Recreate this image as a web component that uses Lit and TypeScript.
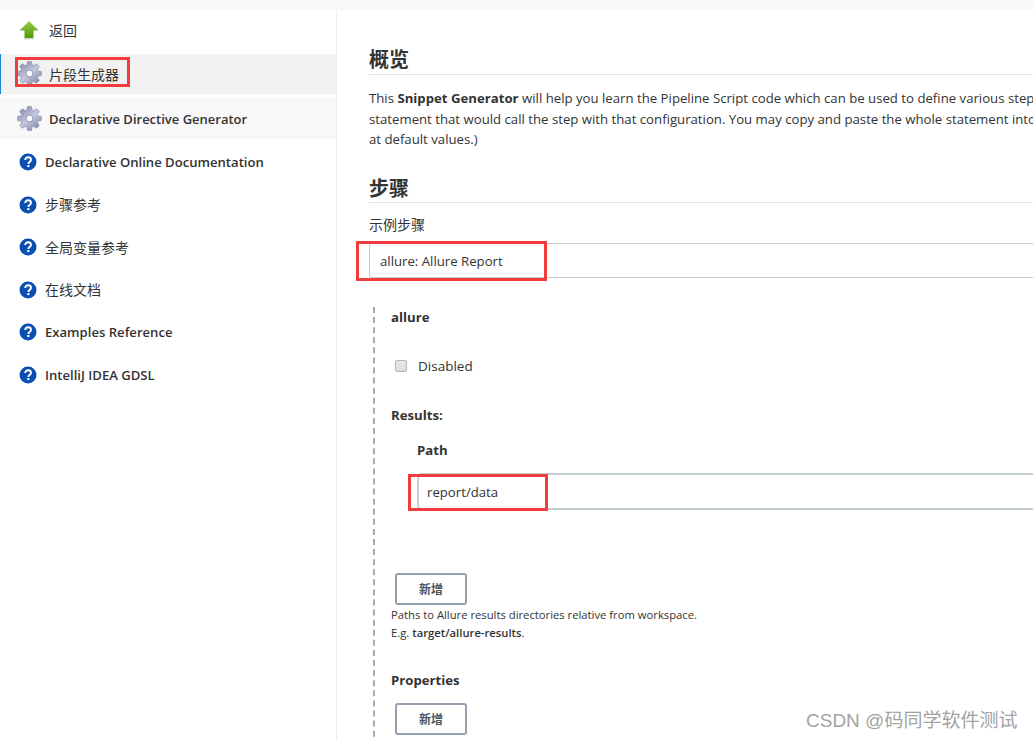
import { LitElement, html, css, svg } from "lit";
import { customElement } from "lit/decorators.js";

const gearPath = (() => {
  const n = 8, cx = 12, cy = 12, ro = 11.6, ri = 8;
  let d = "";
  for (let i = 0; i < n; i++) {
    const a = (i / n) * Math.PI * 2 - Math.PI / 2;
    const w = 0.2, v = 0.17;
    const pts = [
      [ri, a - w - v], [ro, a - w + 0.04], [ro, a + w - 0.04], [ri, a + w + v],
    ];
    for (const [r, t] of pts) {
      d += `${d ? "L" : "M"}${(cx + r * Math.cos(t)).toFixed(2)} ${(cy + r * Math.sin(t)).toFixed(2)}`;
    }
  }
  return d + "Z";
})();

const gear = (id: string) => svg`<svg class="gear" viewBox="0 0 24 24" width="25" height="25">
  <defs><linearGradient id=${id} x1="0.1" y1="0" x2="0.9" y2="1">
    <stop offset="0" stop-color="#7f85ab"/><stop offset="0.5" stop-color="#c6c8de"/><stop offset="1" stop-color="#7b7fa3"/>
  </linearGradient></defs>
  <path d=${gearPath} fill=${`url(#${id})`} stroke="#7d81a0" stroke-width="0.5"/>
  <circle cx="12" cy="12" r="3.3" fill="#fff" stroke="#6f7395" stroke-width="0.7"/>
</svg>`;

const arrow = svg`<svg class="arrow" viewBox="0 0 20 20" width="20" height="20">
  <defs><linearGradient id="ag" x1="0" y1="0" x2="0" y2="1">
    <stop offset="0" stop-color="#9ccc50"/><stop offset="1" stop-color="#4f9a06"/>
  </linearGradient></defs>
  <path d="M10 1 L19.5 10.5 L14.5 10.5 L14.5 18 L5.5 18 L5.5 10.5 L0.5 10.5 Z" fill="url(#ag)"/>
  <rect x="5" y="18" width="10" height="1.4" fill="#d5d8d0"/>
</svg>`;

const help = svg`<svg class="help" viewBox="0 0 18 18" width="18" height="18">
  <circle cx="9" cy="9" r="8.5" fill="#0b4fb3"/>
  <path d="M6.2 7 C6.2 5.2 7.5 4.2 9.1 4.2 C10.8 4.2 12 5.2 12 6.7 C12 8 11.2 8.6 10.3 9.2 C9.6 9.7 9.4 10 9.4 10.9" fill="none" stroke="#fff" stroke-width="1.9"/>
  <rect x="8.3" y="12" width="2.1" height="2.1" fill="#fff"/>
</svg>`;

@customElement("app-root")
export class AppRoot extends LitElement {
  static styles = css`
    :host {
      display: block;
      position: relative;
      width: 1033px;
      height: 740px;
      overflow: hidden;
      background: #fff;
      color: #333;
      font-family: "Open Sans", "Noto Sans CJK SC", sans-serif;
      font-size: 13.2px;
    }
    .cjk { font-size: 14px; font-weight: 400; }
    .strip { height: 10px; background: #f8f8f8; }
    .page { display: flex; height: 730px; }
    .side { width: 336px; flex: none; border-right: 1px solid #eee; }
    .row { display: flex; align-items: center; color: #333; }
    .back {
      height: 43px;
      padding-left: 19px;
      gap: 10px;
      padding-bottom: 3px;
      box-sizing: border-box;
      margin-bottom: 1px;
    }
    .active {
      height: 40px;
      background: #f2f2f2;
      border-left: 1px solid #1387d4;
      padding-left: 16px;
      padding-bottom: 1px;
      box-sizing: border-box;
      gap: 7px;
    }
    .decl {
      height: 41px;
      margin-top: 4px;
      background: #f8f8f8;
      padding-left: 17px;
      gap: 7px;
      font-size: 13px;
      font-weight: 600;
    }
    .helps { display: flex; flex-direction: column; padding-top: 2px; }
    .help-row { height: 42.5px; padding-left: 19px; gap: 8px; font-size: 13.1px; font-weight: 600; }
    .help-row .cjk { margin-bottom: 1px; }
    .main { flex: 1; min-width: 0; overflow: hidden; padding: 33px 0 0 32px; }
    h2 {
      margin: 0;
      font-size: 20px;
      line-height: 34px;
      font-weight: 700;
      color: #333;
      border-bottom: 1px solid #e1e1e1;
      height: 31px;
    }
    .para { margin: 0; padding-top: 13px; line-height: 20.7px; white-space: nowrap; }
    .para b { font-weight: 700; }
    h2.steps { margin-top: 20.9px; line-height: 35px; }
    .lbl { margin-top: 12px; line-height: 20px; }
    .select {
      margin-top: 8px;
      height: 33px;
      border: 1px solid #c3cccf;
      border-right: none;
      border-radius: 3px 0 0 3px;
      padding-left: 10px;
      display: flex;
      align-items: center;
      white-space: nowrap;
    }
    .block {
      margin: 29px 0 0 4px;
      border-left: 2px dashed #aaa;
      padding-left: 16px;
      height: 470px;
    }
    .t { font-weight: 700; line-height: 20px; }
    .allure { margin-top: 1px; }
    .check { display: flex; align-items: center; margin: 29px 0 0 4px; height: 20px; gap: 11px; }
    .check span:last-child { font-size: 13.5px; }
    .box {
      width: 10px;
      height: 10px;
      border: 1px solid #b4b4b4;
      border-radius: 2px;
      background: linear-gradient(#e9e9e9, #dcdcdc);
    }
    .results { margin-top: 29px; }
    .path { margin: 15px 0 0 26px; }
    .input {
      margin: 13px 0 0 26px;
      height: 33px;
      border: 2px solid #c3cfd0;
      border-right: none;
      border-radius: 4px 0 0 4px;
      padding-left: 8px;
      display: flex;
      align-items: center;
      white-space: nowrap;
    }
    .btn {
      display: flex;
      align-items: center;
      justify-content: center;
      margin-left: 4px;
      width: 68px;
      height: 28px;
      border: 2px solid #95a1ac;
      border-radius: 3px;
      font-size: 12px;
      font-weight: 600;
      color: #4d545d;
      background: #fff;
    }
    .add1 { margin-top: 63px; }
    .hint { font-size: 11.25px; line-height: 18px; margin-top: 1px; color: #333; white-space: nowrap; }
    .hint b { font-weight: 600; }
    .props { margin-top: 28px; }
    .add2 { margin-top: 13px; }
    .mark {
      position: absolute;
      border: 3px solid #f03c3c;
      box-sizing: border-box;
      pointer-events: none;
    }
    .m1 { left: 15px; top: 57px; width: 115px; height: 30px; }
    .m2 { left: 356px; top: 241px; width: 191px; height: 40px; }
    .m3 { left: 408px; top: 474px; width: 140px; height: 37px; }
    .wm {
      position: absolute;
      left: 806px;
      top: 708px;
      font-family: "Liberation Sans", "Noto Sans CJK SC", sans-serif;
      font-size: 19px;
      line-height: 26px;
      color: #a3a3a3;
      white-space: nowrap;
    }
  `;

  render() {
    const helps: [string, boolean][] = [
      ["Declarative Online Documentation", false],
      ["步骤参考", true],
      ["全局变量参考", true],
      ["在线文档", true],
      ["Examples Reference", false],
      ["IntelliJ IDEA GDSL", false],
    ];
    return html`
      <div class="strip"></div>
      <div class="page">
        <nav class="side">
          <div class="row back">${arrow}<span class="cjk">返回</span></div>
          <div class="row active">${gear("g1")}<span class="cjk">片段生成器</span></div>
          <div class="row decl">${gear("g2")}<span>Declarative Directive Generator</span></div>
          <div class="helps">
            ${helps.map(([h, c]) => html`<div class="row help-row">${help}<span class=${c ? "cjk" : ""}>${h}</span></div>`)}
          </div>
        </nav>
        <main class="main">
          <h2>概览</h2>
          <p class="para">
            This <b>Snippet Generator</b> will help you learn the Pipeline Script code which can be used to define various steps<br />
            statement that would call the step with that configuration. You may copy and paste the whole statement into<br />
            at default values.)
          </p>
          <h2 class="steps">步骤</h2>
          <div class="lbl cjk">示例步骤</div>
          <div class="select">allure: Allure Report</div>
          <div class="block">
            <div class="t allure">allure</div>
            <div class="check"><span class="box"></span><span>Disabled</span></div>
            <div class="t results">Results:</div>
            <div class="t path">Path</div>
            <div class="input">report/data</div>
            <div class="btn add1">新增</div>
            <div class="hint">Paths to Allure results directories relative from workspace.<br />E.g. <b>target/allure-results</b>.</div>
            <div class="t props">Properties</div>
            <div class="btn add2">新增</div>
          </div>
        </main>
      </div>
      <div class="mark m1"></div>
      <div class="mark m2"></div>
      <div class="mark m3"></div>
      <div class="wm">CSDN @码同学软件测试</div>
    `;
  }
}
